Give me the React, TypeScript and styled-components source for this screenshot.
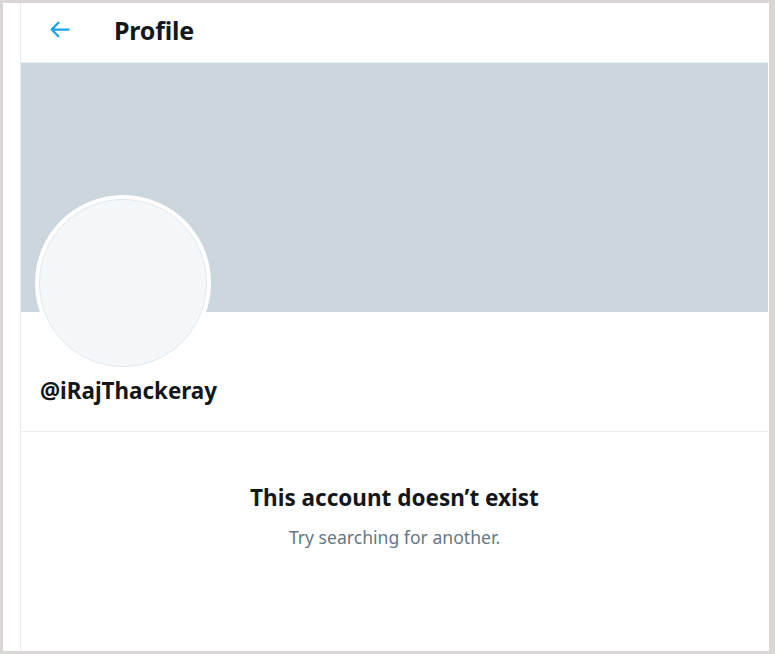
import React from "react";
import styled, { createGlobalStyle } from "styled-components";

const Global = createGlobalStyle`
  html, body { margin: 0; padding: 0; }
  body {
    background: #dbd6d6;
    font-family: "Noto Sans", "Open Sans", sans-serif;
    color: #14171a;
  }
`;

const Frame = styled.div`
  margin: 3px 6px 3px 3px;
  height: 648px;
  background: #ffffff;
  padding-left: 17px;
  overflow: hidden;
`;

const Column = styled.main`
  width: 747px;
  height: 100%;
  border-left: 1px solid #e6ecf0;
  border-right: 1px solid #ffffff;
  display: flex;
  flex-direction: column;
`;

const Header = styled.header`
  height: 59px;
  border-bottom: 1px solid #e6ecf0;
  display: flex;
  align-items: center;
  padding-left: 25px;
  gap: 41px;
`;

const BackButton = styled.button`
  border: 0;
  background: none;
  padding: 0;
  width: 27px;
  height: 27px;
  margin-top: -6px;
  color: #1da1f2;
  display: flex;
  cursor: pointer;
`;

const Title = styled.h1`
  margin: 0;
  font-size: 25px;
  line-height: 32px;
  font-weight: 700;
  letter-spacing: -0.2px;
  margin-top: -5px;
`;

const Banner = styled.div`
  height: 249px;
  background: #ccd6dd;
`;

const ProfileInfo = styled.section`
  padding: 0 14px;
  border-bottom: 1px solid #e6ecf0;
  height: 120px;
  box-sizing: border-box;
`;

const AvatarRing = styled.div`
  width: 176px;
  height: 176px;
  margin-top: -117px;
  border-radius: 50%;
  background: #ffffff;
  padding: 4px;
  box-sizing: border-box;
`;

const AvatarFill = styled.div`
  width: 100%;
  height: 100%;
  border-radius: 50%;
  background: #f5f8fa;
  border: 1px solid #e1e8ed;
  box-sizing: border-box;
`;

const Handle = styled.div`
  margin: 5px 0 0 5px;
  font-size: 22.4px;
  line-height: 30px;
  font-weight: 700;
`;

const Message = styled.section`
  padding-top: 51px;
  display: flex;
  flex-direction: column;
  align-items: center;
  gap: 12px;
`;

const MessageTitle = styled.h2`
  margin: 0;
  font-size: 22.5px;
  line-height: 30px;
  font-weight: 700;
`;

const MessageText = styled.p`
  margin: 0;
  font-size: 17.6px;
  line-height: 24px;
  color: #657786;
`;

export default function App() {
  return (
    <>
      <Global />
      <Frame>
        <Column>
          <Header>
            <BackButton aria-label="Back">
              <svg viewBox="0 0 24 24" width="27" height="27" fill="currentColor">
                <path d="M20 11H7.414l4.293-4.293c.39-.39.39-1.023 0-1.414s-1.023-.39-1.414 0l-6 6c-.39.39-.39 1.023 0 1.414l6 6c.195.195.45.293.707.293s.512-.098.707-.293c.39-.39.39-1.023 0-1.414L7.414 13H20c.553 0 1-.447 1-1s-.447-1-1-1z" />
              </svg>
            </BackButton>
            <Title>Profile</Title>
          </Header>
          <Banner />
          <ProfileInfo>
            <AvatarRing>
              <AvatarFill />
            </AvatarRing>
            <Handle>@iRajThackeray</Handle>
          </ProfileInfo>
          <Message>
            <MessageTitle>This account doesn’t exist</MessageTitle>
            <MessageText>Try searching for another.</MessageText>
          </Message>
        </Column>
      </Frame>
    </>
  );
}
